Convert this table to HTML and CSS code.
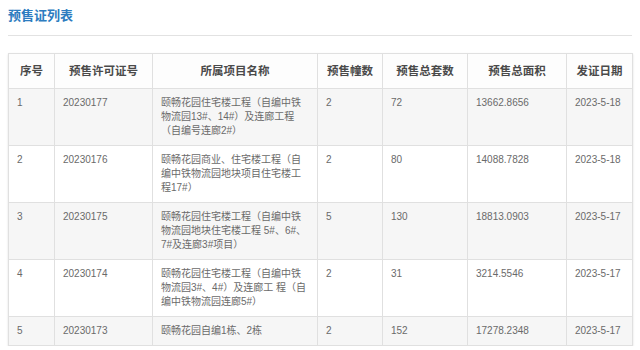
FILE: index.html
```html
<!DOCTYPE html>
<html lang="zh-CN">
<head>
<meta charset="utf-8">
<title>预售证列表</title>
<link rel="stylesheet" href="styles.css">
</head>
<body>
<div class="page">
  <h2 class="title">预售证列表</h2>
  <table class="list">
    <colgroup>
      <col class="c1"><col class="c2"><col class="c3"><col class="c4"><col class="c5"><col class="c6"><col class="c7">
    </colgroup>
    <thead>
      <tr><th>序号</th><th>预售许可证号</th><th>所属项目名称</th><th>预售幢数</th><th>预售总套数</th><th>预售总面积</th><th>发证日期</th></tr>
    </thead>
    <tbody>
      <tr class="odd"><td>1</td><td>20230177</td><td>颐畅花园住宅楼工程（自编中铁物流园13#、14#）及连廊工程（自编号连廊2#）</td><td>2</td><td>72</td><td>13662.8656</td><td>2023-5-18</td></tr>
      <tr><td>2</td><td>20230176</td><td>颐畅花园商业、住宅楼工程（自编中铁物流园地块项目住宅楼工程17#）</td><td>2</td><td>80</td><td>14088.7828</td><td>2023-5-18</td></tr>
      <tr class="odd"><td>3</td><td>20230175</td><td>颐畅花园住宅楼工程（自编中铁物流园地块住宅楼工程 5#、6#、7#及连廊3#项目）</td><td>5</td><td>130</td><td>18813.0903</td><td>2023-5-17</td></tr>
      <tr><td>4</td><td>20230174</td><td>颐畅花园住宅楼工程（自编中铁物流园3#、4#）及连廊工 程（自编中铁物流园连廊5#）</td><td>2</td><td>31</td><td>3214.5546</td><td>2023-5-17</td></tr>
      <tr class="odd"><td>5</td><td>20230173</td><td>颐畅花园自编1栋、2栋</td><td>2</td><td>152</td><td>17278.2348</td><td>2023-5-17</td></tr>
    </tbody>
  </table>
</div>
</body>
</html>
```
FILE: styles.css
```css
html, body {
  margin: 0;
  padding: 0;
  background: #fff;
}
body {
  font-family: "Liberation Sans", "Noto Sans CJK SC", sans-serif;
}
.page {
  padding: 8px 8px 0 8px;
  width: 624px;
}
.title {
  margin: 0;
  font-size: 13px;
  line-height: 16px;
  font-weight: bold;
  color: #2d7cc0;
  padding-bottom: 11px;
  border-bottom: 1px solid #e2e2e2;
}
.list {
  margin-top: 17px;
  width: 624px;
  border-collapse: collapse;
  table-layout: fixed;
  box-shadow: 0 1px 2px rgba(0,0,0,0.12);
}
.c1 { width: 46px; }
.c2 { width: 98px; }
.c3 { width: 165px; }
.c4 { width: 65px; }
.c5 { width: 85px; }
.c6 { width: 99px; }
.c7 { width: 66px; }
.list th, .list td {
  border: 1px solid #e0e0e0;
}
.list th {
  font-size: 11.5px;
  line-height: 14px;
  padding: 10px 2px;
  font-weight: bold;
  color: #4a4a4a;
  text-align: center;
  background: #fdfdfd;
}
.list td {
  font-size: 10px;
  line-height: 14px;
  padding: 7px 8px;
  color: #6a6a6a;
  vertical-align: top;
  text-align: left;
}
.list tr.odd td {
  background: #f6f6f6;
}
```
